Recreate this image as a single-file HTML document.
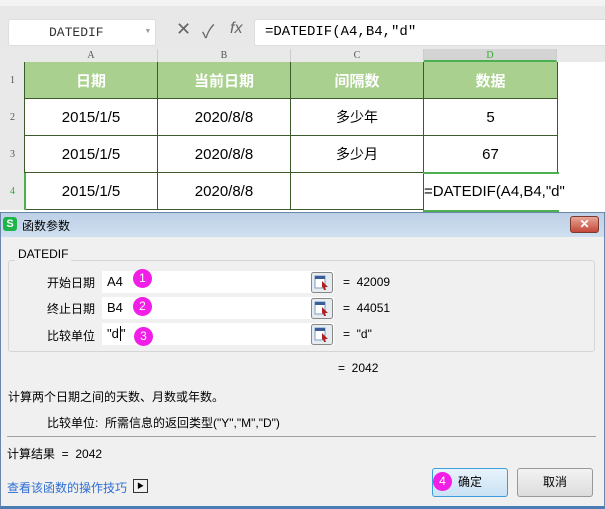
<!DOCTYPE html>
<html><head><meta charset="utf-8"><style>
*{margin:0;padding:0;box-sizing:border-box}
body{width:605px;height:509px;overflow:hidden;background:#fff;font-family:"Liberation Sans","Noto Sans CJK SC",sans-serif;position:relative;font-size:12px;color:#000}
.a{position:absolute}
.cell{position:absolute;display:flex;align-items:center;justify-content:center;font-size:15px;border-right:1px solid #3d5a2a;border-bottom:1px solid #3d5a2a}
.hd{background:#a9d08e;color:#fff;font-weight:bold;font-size:15px}
.rh{position:absolute;left:0;width:25px;display:flex;align-items:center;justify-content:center;font-size:10px;color:#555;background:#e9e9e9;font-family:"Liberation Serif",serif}
.ch{position:absolute;top:49px;height:13px;font-size:10px;color:#555;text-align:center;line-height:13px;background:#e9e9e9;border-right:1px solid #ccc;font-family:"Liberation Serif",serif}
.inp{position:absolute;left:102px;width:232px;height:22px;background:#fff;font-size:13px;line-height:22px;padding-left:5px}
.btn{position:absolute;left:311px;width:22px;height:20px;border:1px solid #888;border-radius:2px;background:linear-gradient(#f4f6f8,#dde3ea)}
.circ{position:absolute;width:19px;height:19px;border-radius:50%;background:#f01ee6;color:#fff;font-size:12px;text-align:center;line-height:19px}
</style></head><body>
<div class="a" style="left:0;top:0;width:605px;height:49px;background:#e8e8e8"></div>
<div class="a" style="left:0;top:0;width:605px;height:6px;background:#f3f3f3"></div>
<div class="a" style="left:8px;top:19px;width:148px;height:27px;background:#fff;border:1px solid #ddd;border-radius:3px;font-family:'Liberation Mono',monospace;font-size:13px;line-height:25px;padding-left:40px;color:#333">DATEDIF<span style="position:absolute;right:5px;top:0;font-size:7px;color:#999">▼</span></div>
<div class="a" style="left:176px;top:19px;font-size:18px;color:#666">✕</div>
<div class="a" style="left:202px;top:18px;font-size:18px;color:#666">✓</div>
<div class="a" style="left:230px;top:20px;font-size:16px;color:#666;font-style:italic">fx</div>
<div class="a" style="left:254px;top:19px;width:360px;height:27px;background:#fff;border:1px solid #ddd;border-radius:3px;font-family:'Liberation Mono',monospace;font-size:14px;line-height:25px;padding-left:10px">=DATEDIF(A4,B4,″d″</div>
<div class="a" style="left:0;top:49px;width:605px;height:13px;background:#e9e9e9"></div>
<div class="ch" style="left:25px;width:133px">A</div>
<div class="ch" style="left:158px;width:133px">B</div>
<div class="ch" style="left:291px;width:133px">C</div>
<div class="ch" style="left:424px;width:133px;background:#d4d4d4;color:#3a3;border-bottom:2px solid #4caf50">D</div>
<div class="rh" style="top:62px;height:37px">1</div>
<div class="rh" style="top:99px;height:37px">2</div>
<div class="rh" style="top:136px;height:37px">3</div>
<div class="rh" style="top:173px;height:37px;color:#3a3">4</div>
<div class="a" style="left:24px;top:62px;width:1px;height:148px;background:#3d5a2a"></div>
<div class="cell hd" style="left:25px;top:62px;width:133px;height:37px">日期</div>
<div class="cell hd" style="left:158px;top:62px;width:133px;height:37px">当前日期</div>
<div class="cell hd" style="left:291px;top:62px;width:133px;height:37px">间隔数</div>
<div class="cell hd" style="left:424px;top:62px;width:134px;height:37px">数据</div>
<div class="cell" style="left:25px;top:99px;width:133px;height:37px">2015/1/5</div>
<div class="cell" style="left:158px;top:99px;width:133px;height:37px">2020/8/8</div>
<div class="cell" style="left:291px;top:99px;width:133px;height:37px;font-size:14px">多少年</div>
<div class="cell" style="left:424px;top:99px;width:134px;height:37px">5</div>
<div class="cell" style="left:25px;top:136px;width:133px;height:37px">2015/1/5</div>
<div class="cell" style="left:158px;top:136px;width:133px;height:37px">2020/8/8</div>
<div class="cell" style="left:291px;top:136px;width:133px;height:37px;font-size:14px">多少月</div>
<div class="cell" style="left:424px;top:136px;width:134px;height:37px">67</div>
<div class="cell" style="left:25px;top:173px;width:133px;height:37px">2015/1/5</div>
<div class="cell" style="left:158px;top:173px;width:133px;height:37px">2020/8/8</div>
<div class="cell" style="left:291px;top:173px;width:133px;height:37px"></div>
<div class="a" style="left:423px;top:172px;width:136px;height:40px;border-top:2px solid #4caf50;border-bottom:2px solid #4caf50;font-size:15px;line-height:36px;padding-left:1px">=DATEDIF(A4,B4,"d"</div>
<div class="a" style="left:24px;top:173px;width:2px;height:37px;background:#4caf50"></div>
<!-- dialog -->
<div class="a" style="left:0;top:212px;width:605px;height:297px;background:#f0f0f0;border:1px solid #6a86a8;border-bottom:3px solid #4b7db5"></div>
<div class="a" style="left:1px;top:213px;width:603px;height:24px;background:linear-gradient(#bed0e6,#cfdff0)"></div>
<div class="a" style="left:3px;top:217px;width:14px;height:14px;background:#1db54a;border-radius:3px;color:#fff;font-size:11px;font-weight:bold;text-align:center;line-height:14px">S</div>
<div class="a" style="left:22px;top:217px;font-size:12px">函数参数</div>
<div class="a" style="left:570px;top:216px;width:29px;height:17px;background:linear-gradient(#e7a596,#c4493a);border:1px solid #7a3a30;border-radius:3px;color:#fff;font-weight:bold;text-align:center;line-height:15px;font-size:12px">✕</div>
<div class="a" style="left:8px;top:260px;width:587px;height:92px;border:1px solid #d5d5d5;border-radius:3px"></div>
<div class="a" style="left:15px;top:247px;background:#f0f0f0;padding:0 3px;font-size:12px">DATEDIF</div>
<div class="a" style="left:47px;top:274px">开始日期</div>
<div class="a" style="left:47px;top:300px">终止日期</div>
<div class="a" style="left:47px;top:327px">比较单位</div>
<div class="inp" style="top:271px">A4</div>
<div class="inp" style="top:297px">B4</div>
<div class="inp" style="top:323px">"d<span style="border-left:1px solid #000;margin-left:1px">"</span></div>
<svg class="a" style="left:311px;top:272px" width="22" height="74" viewBox="0 0 22 74">
<g id="b"><rect x="0.5" y="0.5" width="21" height="20" rx="2" fill="#e6ebf0" stroke="#888"/><rect x="4" y="4" width="10" height="12" fill="#fff" stroke="#7a9cc4"/><rect x="4" y="4" width="10" height="3" fill="#3a5d9a"/><path d="M11 9 L17 15 L14 15 L15 18 L13 18 L12 15 L11 16Z" fill="#b02020"/></g>
<use href="#b" y="26"/><use href="#b" y="52"/></svg>
<div class="circ" style="left:133px;top:269px">1</div>
<div class="circ" style="left:133px;top:297px">2</div>
<div class="circ" style="left:134px;top:327px">3</div>
<div class="a" style="left:343px;top:275px">= &nbsp;42009</div>
<div class="a" style="left:343px;top:301px">= &nbsp;44051</div>
<div class="a" style="left:343px;top:327px">= &nbsp;"d"</div>
<div class="a" style="left:338px;top:361px">= &nbsp;2042</div>
<div class="a" style="left:8px;top:388px">计算两个日期之间的天数、月数或年数。</div>
<div class="a" style="left:47px;top:414px">比较单位: &nbsp;所需信息的返回类型("Y","M","D")</div>
<div class="a" style="left:7px;top:436px;width:589px;height:1px;background:#a0a0a0"></div>
<div class="a" style="left:7px;top:445px">计算结果 &nbsp;= &nbsp;2042</div>
<div class="a" style="left:7px;top:479px;color:#2f6fd2">查看该函数的操作技巧</div>
<div class="a" style="left:133px;top:479px;width:15px;height:14px;border:1px solid #333;font-size:7px;text-align:center;line-height:13px">▶</div>
<div class="a" style="left:432px;top:468px;width:76px;height:29px;border:1px solid #3c9ddb;border-radius:3px;background:linear-gradient(#e8f3fb,#c9e2f4);text-align:center;line-height:27px">确定</div>
<div class="circ" style="left:433px;top:472px">4</div>
<div class="a" style="left:517px;top:468px;width:76px;height:29px;border:1px solid #999;border-radius:3px;background:linear-gradient(#f3f3f3,#dcdcdc);text-align:center;line-height:27px">取消</div>
</body></html>
